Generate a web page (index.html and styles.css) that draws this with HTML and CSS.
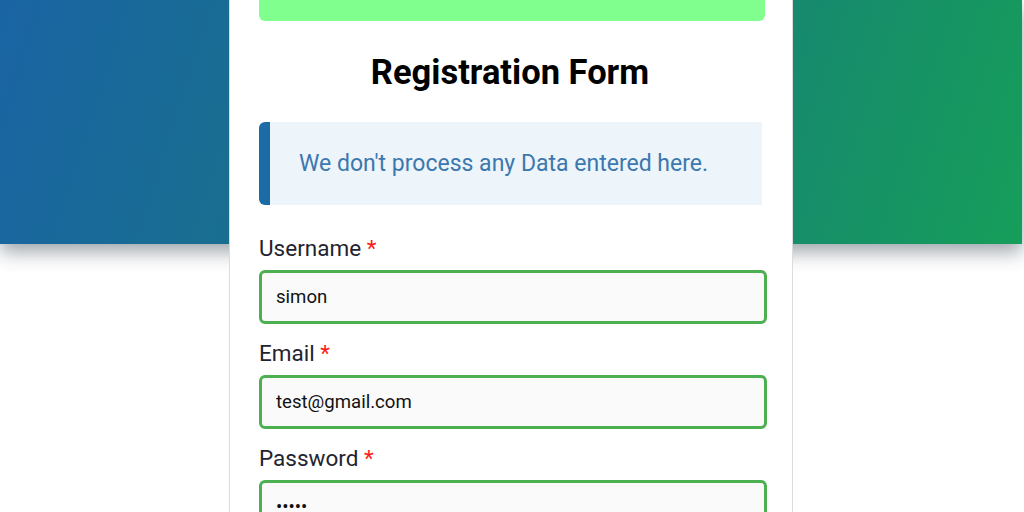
FILE: index.html
```html
<!DOCTYPE html>
<html lang="en">
<head>
<meta charset="utf-8">
<title>Registration Form</title>
<link rel="stylesheet" href="styles.css">
</head>
<body>
<div class="page">
  <div class="band"></div>
  <main class="card">
    <div class="banner"></div>
    <h1 class="title">Registration Form</h1>
    <div class="notice">We don't process any Data entered here.</div>
    <form class="form">
      <label class="field">
        <span class="label">Username <span class="req">*</span></span>
        <input class="input" type="text" value="simon">
      </label>
      <label class="field">
        <span class="label">Email <span class="req">*</span></span>
        <input class="input" type="email" value="test@gmail.com">
      </label>
      <label class="field">
        <span class="label">Password <span class="req">*</span></span>
        <input class="input" type="password" value="simon">
      </label>
    </form>
  </main>
</div>
</body>
</html>
```
FILE: styles.css
```css
html, body {
  margin: 0;
  padding: 0;
  background: #ffffff;
  overflow: hidden;
}
body {
  font-family: Roboto, "Liberation Sans", sans-serif;
  height: 512px;
}
.page {
  display: grid;
  grid-template-columns: 1fr;
  height: 512px;
}
.band {
  grid-area: 1 / 1;
  height: 244px;
  margin-right: 2px;
  background: linear-gradient(108deg, #1a64a4 0%, #177680 48%, #169e5a 100%);
  box-shadow: 0 8px 18px rgba(40, 55, 70, 0.45);
}
.card {
  grid-area: 1 / 1;
  justify-self: start;
  margin-left: 229px;
  width: 564px;
  box-sizing: border-box;
  background: #ffffff;
  border-left: 1px solid #dcdcdc;
  border-right: 1px solid #dcdcdc;
  padding: 0 27px 0 29px;
  display: flex;
  flex-direction: column;
  z-index: 1;
}
.banner {
  height: 21px;
  background: #80ff8f;
  border-radius: 0 0 6px 6px;
}
.title {
  margin: 31px 0 0;
  padding-right: 4px;
  font-size: 34.5px;
  line-height: 40px;
  font-weight: 700;
  text-align: center;
  color: #000;
}
.notice {
  margin-top: 30px;
  width: calc(100% - 3px);
  box-sizing: border-box;
  background: #edf4fa;
  border-left: 11px solid #1b6ba6;
  border-radius: 6px 0 0 6px;
  padding: 30px 29px 30px;
  font-size: 23px;
  line-height: 23px;
  color: #3c78ae;
}
.form {
  display: flex;
  flex-direction: column;
  gap: 17px;
  margin-top: 31px;
}
.field {
  display: flex;
  flex-direction: column;
  gap: 10px;
}
.label {
  font-size: 22.5px;
  line-height: 24px;
  color: #1f2430;
}
.req {
  color: #ff1a1a;
}
.input {
  width: calc(100% + 2px);
  box-sizing: border-box;
  height: 54px;
  border: 3px solid #4caf50;
  border-radius: 6px;
  background: #fafafa;
  padding: 0 14px;
  font-family: Roboto, "Liberation Sans", sans-serif;
  font-size: 18.6px;
  color: #111;
  outline: none;
}
```
